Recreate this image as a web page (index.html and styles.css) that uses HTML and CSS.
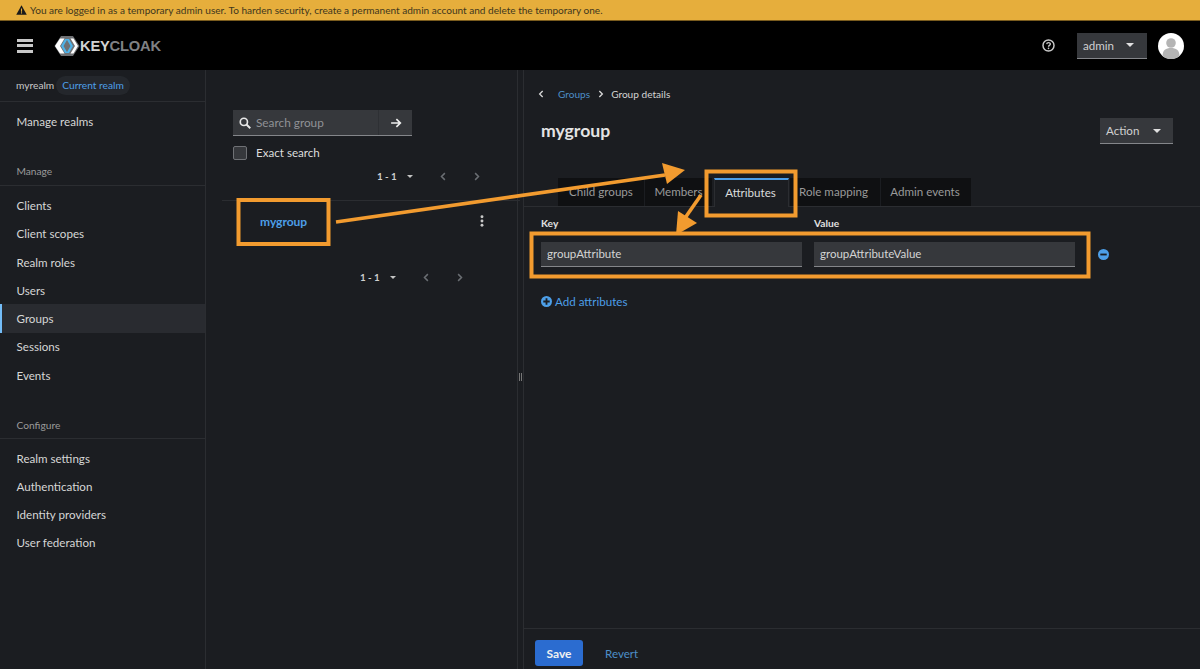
FILE: index.html
```html
<!DOCTYPE html>
<html lang="en">
<head>
<meta charset="utf-8">
<title>Keycloak - Group details</title>
<link rel="stylesheet" href="styles.css">
</head>
<body>
<div class="page">
  <div class="banner">
    <svg class="warn" viewBox="0 0 12 11" width="11" height="10"><path d="M6 .3 11.8 10.7H.2Z" fill="#1a1a1a"/><path d="M5.400 3.800h1.200v3.600H5.400zM5.400 8.100h1.200v1.200H5.400z" fill="#e6ae3c"/></svg>
    <span>You are logged in as a temporary admin user. To harden security, create a permanent admin account and delete the temporary one.</span>
  </div>
  <header class="masthead">
    <div class="burger"><i></i><i></i><i></i></div>
    <svg class="logo-mark" viewBox="0 0 28 24" width="28" height="24">
      <path d="M8 2H20l6.500 10L20 22H8L1.500 12Z" fill="#6f7174"/>
      <path d="M2 12 7 4.500h4.500L7 12l4.500 7.500H7Z" fill="#fff"/>
      <path d="M8 12l4-7h2.500l-4 7 4 7H12Z" fill="#4fb3e8"/>
      <path d="M13.500 5h2.500l4 7-4 7h-2.500l4-7Z" fill="#4fb3e8"/>
      <path d="M17.500 4.500h3L25 12l-4.500 7.500h-3L22 12Z" fill="#fff"/>
    </svg>
    <div class="logo-text"><b>KEY</b>CLOAK</div>
    <div class="mast-right">
      <svg class="help" viewBox="0 0 16 16" width="13" height="13"><circle cx="8" cy="8" r="6.800" fill="none" stroke="#c9c9c9" stroke-width="1.800"/><path d="M5.800 6.300C5.900 3.800 10.300 3.800 10.300 6.300 10.300 8 8 7.800 8 9.500" fill="none" stroke="#c9c9c9" stroke-width="1.600"/><circle cx="8" cy="11.600" r="1" fill="#c9c9c9"/></svg>
      <div class="select user-select"><span>admin</span><i class="caret"></i></div>
      <svg class="avatar" viewBox="0 0 26 26" width="26" height="26"><circle cx="13" cy="13" r="13" fill="#fff"/><circle cx="13" cy="10" r="4.800" fill="#b4b4b4"/><path d="M4.500 23c0-6 3.500-8 8.500-8s8.500 2 8.500 8a13 13 0 0 1-17 0Z" fill="#b4b4b4"/></svg>
    </div>
  </header>
  <div class="body">
    <nav class="sidebar">
      <div class="realm"><span>myrealm</span><span class="realm-chip">Current realm</span></div>
      <a class="nav-item top-item">Manage realms</a>
      <div class="nav-title">Manage</div>
      <a class="nav-item">Clients</a>
      <a class="nav-item">Client scopes</a>
      <a class="nav-item">Realm roles</a>
      <a class="nav-item">Users</a>
      <a class="nav-item active">Groups</a>
      <a class="nav-item">Sessions</a>
      <a class="nav-item">Events</a>
      <div class="nav-title second">Configure</div>
      <a class="nav-item">Realm settings</a>
      <a class="nav-item">Authentication</a>
      <a class="nav-item">Identity providers</a>
      <a class="nav-item">User federation</a>
    </nav>
    <section class="tree">
      <div class="search">
        <div class="search-field">
          <svg viewBox="0 0 16 16" width="12" height="12"><circle cx="6.500" cy="6.500" r="4.800" fill="none" stroke="#e8e8e8" stroke-width="2.200"/><path d="m10 10 5 5" stroke="#e8e8e8" stroke-width="2.600"/></svg>
          <span>Search group</span>
        </div>
        <div class="search-go"><svg viewBox="0 0 16 16" width="12" height="12"><path d="M1.500 8h12M8.500 2.800 13.800 8l-5.300 5.200" fill="none" stroke="#eee" stroke-width="2.200"/></svg></div>
      </div>
      <label class="exact"><i class="check"></i><span>Exact search</span></label>
      <div class="pager pager-top">
        <b>1 - 1</b><i class="caret small"></i>
        <svg viewBox="0 0 8 12" width="6" height="9"><path d="M6.500 1.500 2 6l4.500 4.500" fill="none" stroke="#6a6e73" stroke-width="2"/></svg>
        <svg viewBox="0 0 8 12" width="6" height="9"><path d="M1.500 1.500 6 6l-4.500 4.500" fill="none" stroke="#6a6e73" stroke-width="2"/></svg>
      </div>
      <div class="tree-row">
        <a class="group-link">mygroup</a>
        <svg class="kebab" viewBox="0 0 4 14" width="4" height="12"><circle cx="2" cy="2" r="1.700" fill="#c8c8c8"/><circle cx="2" cy="7" r="1.700" fill="#c8c8c8"/><circle cx="2" cy="12" r="1.700" fill="#c8c8c8"/></svg>
      </div>
      <div class="pager pager-bottom">
        <b>1 - 1</b><i class="caret small"></i>
        <svg viewBox="0 0 8 12" width="6" height="9"><path d="M6.500 1.500 2 6l4.500 4.500" fill="none" stroke="#6a6e73" stroke-width="2"/></svg>
        <svg viewBox="0 0 8 12" width="6" height="9"><path d="M1.500 1.500 6 6l-4.500 4.500" fill="none" stroke="#6a6e73" stroke-width="2"/></svg>
      </div>
    </section>
    <div class="splitter"><i></i></div>
    <main class="detail">
      <div class="crumbs">
        <svg viewBox="0 0 8 12" width="6" height="8"><path d="M6.500 1.500 2 6l4.500 4.500" fill="none" stroke="#d8d8d8" stroke-width="2"/></svg>
        <a>Groups</a>
        <svg viewBox="0 0 8 12" width="6" height="8"><path d="M1.500 1.500 6 6l-4.500 4.500" fill="none" stroke="#d8d8d8" stroke-width="2"/></svg>
        <span>Group details</span>
      </div>
      <div class="title-row">
        <h1>mygroup</h1>
        <div class="select action-select"><span>Action</span><i class="caret"></i></div>
      </div>
      <div class="tabs">
        <div class="tab t1">Child groups</div>
        <div class="tab t2">Members</div>
        <div class="tab current t3">Attributes</div>
        <div class="tab t4">Role mapping</div>
        <div class="tab t5">Admin events</div>
      </div>
      <div class="attrs">
        <div class="attr-labels"><span>Key</span><span>Value</span></div>
        <div class="attr-row">
          <div class="input">groupAttribute</div>
          <div class="input">groupAttributeValue</div>
          <svg class="minus" viewBox="0 0 12 12" width="11" height="11"><circle cx="6" cy="6" r="6" fill="#4d9fe8"/><rect x="2.500" y="5" width="7" height="2" fill="#1b1d21"/></svg>
        </div>
        <a class="add"><svg viewBox="0 0 12 12" width="11" height="11"><circle cx="6" cy="6" r="6" fill="#4d9fe8"/><path d="M2.500 6h7M6 2.500v7" stroke="#1b1d21" stroke-width="2"/></svg>Add attributes</a>
      </div>
      <div class="footer">
        <button class="save">Save</button>
        <a class="revert">Revert</a>
      </div>
    </main>
  </div>
  <svg class="marks" viewBox="0 0 1200 669" width="1200" height="669">
    <g fill="none" stroke="#f29b2f" stroke-width="4">
      <rect x="238.500" y="200" width="90" height="44"/>
      <rect x="706.500" y="171.500" width="89" height="44"/>
      <rect x="531.500" y="233.500" width="557" height="43"/>
    </g>
    <path d="M336 222 665 175" stroke="#f29b2f" stroke-width="3.600" fill="none"/>
    <path d="M685 170 662 163 667 184Z" fill="#f29b2f"/>
    <path d="M701 195 685 218" stroke="#f29b2f" stroke-width="3.600" fill="none"/>
    <path d="M676 235 697 223 678 211Z" fill="#f29b2f"/>
  </svg>
</div>
</body>
</html>
```
FILE: styles.css
```css
* { box-sizing: border-box; }
html, body { margin: 0; padding: 0; }
body { background: #1b1d21; color: #d8d8d8; font-family: Lato, "Noto Sans", "Liberation Sans", sans-serif; font-size: 11.600px; }
.page { position: relative; width: 1200px; height: 669px; overflow: hidden; display: flex; flex-direction: column; }
.banner { height: 21px; background: #e6ae3c; border-bottom: 1px solid #7a5c1e; color: #40361c; font-size: 10.070px; display: flex; align-items: center; gap: 3px; padding: 0 0 1px 16px; flex: none; }
.masthead { height: 49px; background: #000; display: flex; align-items: center; flex: none; padding-left: 17px; }
.burger { display: flex; flex-direction: column; gap: 2.500px; width: 16px; }
.burger i { display: block; height: 3px; background: #c8c8c8; }
.logo-mark { margin-left: 20px; flex: none; }
.logo-text { font-family: "Liberation Sans", sans-serif; font-weight: 700; font-size: 14.700px; letter-spacing: -.2px; color: #7f8184; margin-left: -1px; }
.logo-text b { color: #d2d2d2; }
.mast-right { margin-left: auto; display: flex; align-items: center; padding-right: 16px; }
.help { margin-right: 22px; margin-left: 1px; }
.select { display: flex; align-items: center; justify-content: space-between; background: #36383c; border-bottom: 1px solid #84868a; color: #d0d0d0; font-size: 11.600px; }
.user-select { width: 70px; height: 26px; padding: 0 13px 0 6px; margin-right: 11px; }
.caret { display: block; width: 0; height: 0; border-left: 4.500px solid transparent; border-right: 4.500px solid transparent; border-top: 4.500px solid #e0e0e0; }
.caret.small { border-left-width: 3.500px; border-right-width: 3.500px; border-top-width: 3.500px; border-top-color: #c4c4c4; }
.body { flex: 1; display: flex; min-height: 0; }
.sidebar { width: 206px; flex: none; border-right: 1px solid #2b2d31; display: flex; flex-direction: column; font-size: 11.600px; }
.realm { height: 32px; border-bottom: 1px solid #2b2d31; display: flex; align-items: center; gap: 2px; padding: 0 0 1px 16px; font-size: 10.200px; color: #c8c8c8; flex: none; }
.realm-chip { height: 19px; display: flex; align-items: center; padding: 0 6px; border-radius: 10px; background: #24272c; color: #4d9fe8; }
.nav-item { display: flex; align-items: center; height: 28.300px; padding-left: 16.500px; color: #d6d6d6; flex: none; }
.top-item { margin-top: 5.500px; }
.nav-title { height: 29px; margin-top: 21.500px; margin-bottom: 5px; padding: 8px 0 0 16.500px; color: #9a9a9a; font-size: 10.200px; border-bottom: 1px solid #2b2d31; flex: none; }
.nav-title.second { margin-top: 21px; margin-bottom: 4.500px; padding-top: 9px; }
.active { background: #292b30; border-left: 2px solid #73bcf7; padding-left: 14.500px; }
.tree { width: 311px; flex: none; padding-top: 40px; position: relative; }
.search { margin-left: 27px; width: 179px; height: 26px; display: flex; background: #36383c; border-bottom: 1px solid #84868a; }
.search-field { flex: 1; display: flex; align-items: center; gap: 5px; padding-left: 6px; color: #909296; font-size: 11.800px; border-right: 1px solid #2e3034; }
.search-go { width: 33px; display: flex; align-items: center; justify-content: center; }
.exact { display: flex; align-items: center; gap: 9px; margin: 9px 0 0 27px; height: 15px; font-size: 11.600px; color: #dcdcdc; }
.check { display: block; width: 14px; height: 14px; background: #36383c; border: 1px solid #6f7175; border-radius: 2px; }
.pager { display: flex; align-items: center; font-size: 9.800px; color: #d0d0d0; }
.pager b { font-weight: 700; }
.pager .caret { margin-left: 10px; margin-right: 27px; }
.pager svg + svg { margin-left: 28px; }
.pager-top { margin-top: 8px; height: 16px; padding-left: 171px; }
.pager-bottom { margin-top: 24px; height: 16px; padding-left: 154px; }
.tree-row { margin: 16px 0 0 13px; height: 45px; border-top: 1px solid #2b2d31; width: 298px; display: flex; align-items: center; justify-content: space-between; padding: 0 30px 4px 26px; position: relative; left: 3px; }
.group-link { color: #4d9fe8; font-weight: 700; font-size: 12px; padding-left: 12px; }
.kebab { margin-right: 6px; }
.splitter { width: 7px; flex: none; border-left: 1px solid #2b2d31; border-right: 1px solid #2b2d31; display: flex; align-items: center; justify-content: center; }
.splitter i { display: block; width: 3px; height: 8px; border-left: 1px solid #777; border-right: 1px solid #777; margin-top: 14px; }
.detail { flex: 1; display: flex; flex-direction: column; min-width: 0; }
.crumbs { display: flex; align-items: center; padding: 16px 0 0 14px; height: 32px; font-size: 10.100px; gap: 0; color: #d4d4d4; flex: none; }
.crumbs a { color: #4d8fc8; margin-left: 14px; margin-right: 8px; }
.crumbs span { margin-left: 7px; }
.title-row { display: flex; align-items: center; justify-content: space-between; padding: 0 27px 0 17px; margin-top: 16px; height: 26px; flex: none; }
h1 { margin: 0 0 2px; font-size: 17.600px; font-weight: 700; color: #e4e4e4; }
.action-select { width: 73px; height: 26px; padding: 0 12px 0 6px; }
.tabs { display: flex; margin-top: 34px; height: 29px; border-bottom: 1px solid #2b2d31; padding-left: 34px; flex: none; font-size: 11.600px; color: #9a9a9a; }
.tab { height: 28px; background: #0f1012; display: flex; align-items: center; justify-content: center; margin-right: 1px; padding-bottom: 2px; }
.t1 { width: 86px; }
.t2 { width: 67px; }
.t3 { width: 75px; margin-left: 1px; background: #1b1d21; border-top: 2px solid #4d9fe8; border-left: 1px solid #2b2d31; border-right: 1px solid #2b2d31; height: 29px; color: #dcdcdc; padding-bottom: 2px; padding-right: 2px; }
.t4 { width: 90px; padding-right: 3px; }
.t5 { width: 90px; padding-right: 2px; }
.attrs { flex: 1; padding: 10px 0 0 17px; }
.attr-labels { display: flex; font-size: 10.200px; font-weight: 700; color: #e0e0e0; }
.attr-labels span { width: 273px; }
.attr-row { display: flex; align-items: center; margin-top: 13px; gap: 12px; }
.input { width: 261px; height: 25px; background: #36383c; border-bottom: 1px solid #84868a; padding: 0 0 1px 6px; display: flex; align-items: center; color: #d4d4d4; font-size: 11.500px; }
.minus { margin-left: 11px; }
.add { display: flex; align-items: center; gap: 3px; margin-top: 28px; color: #4d9fe8; font-size: 11.600px; }
.footer { height: 41px; border-top: 1px solid #2b2d31; flex: none; display: flex; align-items: center; padding: 0 0 0 11px; }
.save { width: 48px; height: 26px; background: #2b6cd0; border: 0; border-radius: 3px; color: #f0f0f0; font: 700 12px Lato, sans-serif; margin-top: 8px; }
.revert { color: #4d8fc8; font-size: 11.600px; margin: 8px 0 0 22px; }
.marks { position: absolute; left: 0; top: 0; pointer-events: none; }
```
